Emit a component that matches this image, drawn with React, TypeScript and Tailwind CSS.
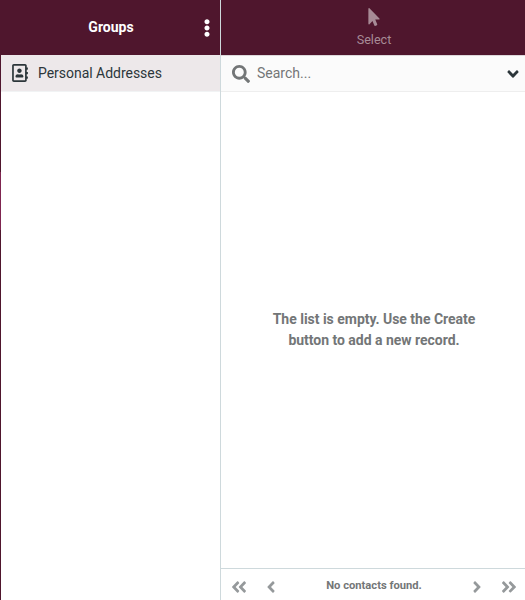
import {
  FaRegAddressBook,
  FaMousePointer,
  FaSearch,
  FaAngleDown,
  FaAngleLeft,
  FaAngleRight,
  FaAngleDoubleLeft,
  FaAngleDoubleRight,
  FaEllipsisV,
} from 'react-icons/fa';

function GroupsPanel() {
  return (
    <section className="flex w-[220px] flex-none flex-col border-r border-[#ced9dc]">
      <header className="flex h-[55px] items-center bg-[#4f162d] text-white">
        <h1 className="flex-1 pl-[23px] text-center text-[14px] font-bold leading-[21px]">Groups</h1>
        <button className="mr-[4px] flex w-[18px] justify-center" aria-label="Group actions">
          <FaEllipsisV className="size-[18px]" />
        </button>
      </header>
      <ul>
        <li className="flex h-[37px] items-center border-b border-[#f1f3f4] bg-[#ede8ea] pl-[10px] text-[14px] text-[#2c363a]">
          <FaRegAddressBook className="size-[18px]" />
          <span className="ml-[9px] tracking-[-0.03px]">Personal Addresses</span>
        </li>
      </ul>
    </section>
  );
}

function ContactsPanel() {
  return (
    <section className="flex min-w-0 flex-1 flex-col">
      <header className="flex h-[55px] flex-col items-center bg-[#4f162d] pt-[8px] pl-[2px] text-[#a78b96]">
        <FaMousePointer className="size-[18px]" />
        <span className="mt-[4px] text-[12.6px] leading-[20px]">Select</span>
      </header>
      <div className="flex h-[37px] items-center border-y border-t-[#ddd8db] border-b-[#eeeeee] bg-[#fbfbfb] pl-[11px] text-[#737677]">
        <FaSearch className="size-[18px]" />
        <span className="ml-[7px] flex-1 text-[14px]">Search...</span>
        <FaAngleDown className="mr-[3px] size-[18px] text-[#2c363a]" />
      </div>
      <div className="flex flex-1 items-center justify-center">
        <p className="w-[230px] pl-[2px] text-center text-[14px] font-bold leading-[21px] tracking-[-0.02px] text-[#737677]">
          The list is empty. Use the Create button to add a new record.
        </p>
      </div>
      <footer className="flex h-[32px] items-center border-t border-[#ced9dc] pt-[4px] text-[#95999b]">
        <FaAngleDoubleLeft className="ml-[9px] size-[18px]" />
        <FaAngleLeft className="ml-[14px] size-[18px]" />
        <span className="flex-1 text-center text-[11.2px] font-bold text-[#737677]">No contacts found.</span>
        <FaAngleRight className="mr-[14px] size-[18px]" />
        <FaAngleDoubleRight className="mr-[7px] size-[18px]" />
      </footer>
    </section>
  );
}

export default function App() {
  return (
    <main className="flex h-[600px] w-[525px] overflow-hidden bg-white font-['Roboto',sans-serif]">
      <div className="w-px flex-none bg-[#4f162d] pt-[172px]">
        <div className="h-[58px] bg-[#7f2550]" />
      </div>
      <GroupsPanel />
      <ContactsPanel />
    </main>
  );
}
